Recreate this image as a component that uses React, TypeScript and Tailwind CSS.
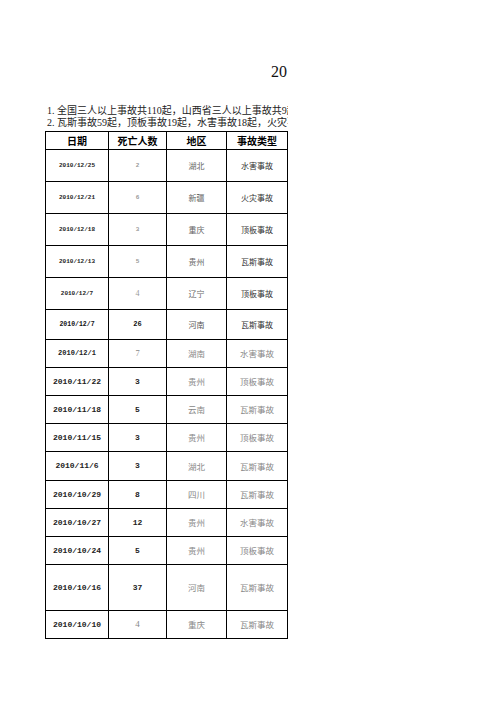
import React from "react";

type Row = {
  date: string;
  num: string;
  region: string;
  kind: string;
  h: string;
  dateCls: string;
  numCls: string;
  regionCls: string;
  kindCls: string;
};

// 字体
const mono = "font-['Liberation_Mono',monospace] font-bold";
const cjk = "font-['Noto_Sans_CJK_SC',sans-serif]";
const serif = "font-['Liberation_Serif','Noto_Sans_CJK_SC',serif]";

// 上半部分（小字）
const upper = {
  dateCls: `${mono} text-[6px] text-[#222]`,
  numCls: `${mono} text-[6px] text-[#999]`,
  regionCls: `${cjk} text-[8px] text-[#666]`,
  kindCls: `${cjk} text-[8px] text-[#333]`,
};

// 下半部分
const lower = {
  dateCls: `${mono} text-[8px] text-[#222]`,
  numCls: `${mono} text-[8px] text-[#222]`,
  regionCls: `${cjk} text-[8.5px] text-[#888]`,
  kindCls: `${cjk} text-[8.5px] text-[#888]`,
};

const rows: Row[] = [
  { date: "2010/12/25", num: "2", region: "湖北", kind: "水害事故", h: "h-[32px]", ...upper },
  { date: "2010/12/21", num: "6", region: "新疆", kind: "火灾事故", h: "h-[32px]", ...upper },
  { date: "2010/12/18", num: "3", region: "重庆", kind: "顶板事故", h: "h-[32px]", ...upper },
  { date: "2010/12/13", num: "5", region: "贵州", kind: "瓦斯事故", h: "h-[32px]", ...upper },
  {
    date: "2010/12/7", num: "4", region: "辽宁", kind: "顶板事故", h: "h-[32px]", ...upper,
    dateCls: `${mono} text-[6px] text-[#222]`,
    numCls: `${serif} text-[8px] text-[#999]`,
  },
  {
    date: "2010/12/7", num: "26", region: "河南", kind: "瓦斯事故", h: "h-[30px]", ...upper,
    dateCls: `${mono} text-[6.5px] text-[#111]`,
    numCls: `${mono} text-[7px] text-[#111]`,
    regionCls: `${cjk} text-[8px] text-[#555]`,
  },
  {
    date: "2010/12/1", num: "7", region: "湖南", kind: "水害事故", h: "h-[28px]", ...lower,
    dateCls: `${mono} text-[7px] text-[#222]`,
    numCls: `${serif} text-[8.5px] text-[#888]`,
  },
  { date: "2010/11/22", num: "3", region: "贵州", kind: "顶板事故", h: "h-[28px]", ...lower },
  { date: "2010/11/18", num: "5", region: "云南", kind: "瓦斯事故", h: "h-[28px]", ...lower },
  { date: "2010/11/15", num: "3", region: "贵州", kind: "顶板事故", h: "h-[28px]", ...lower },
  { date: "2010/11/6", num: "3", region: "湖北", kind: "瓦斯事故", h: "h-[29px]", ...lower },
  { date: "2010/10/29", num: "8", region: "四川", kind: "瓦斯事故", h: "h-[28px]", ...lower },
  { date: "2010/10/27", num: "12", region: "贵州", kind: "水害事故", h: "h-[28px]", ...lower },
  { date: "2010/10/24", num: "5", region: "贵州", kind: "顶板事故", h: "h-[28px]", ...lower },
  { date: "2010/10/16", num: "37", region: "河南", kind: "瓦斯事故", h: "h-[46px]", ...lower },
  {
    date: "2010/10/10", num: "4", region: "重庆", kind: "瓦斯事故", h: "h-[28px]", ...lower,
    numCls: `${serif} text-[9px] text-[#888]`,
  },
];

const cell = "flex items-center justify-center border-r border-b border-black whitespace-nowrap";

export default function App() {
  return (
    <div className="w-[288px] overflow-hidden bg-white">
      {/* 标题（右侧被截断） */}
      <div className={`h-[82px] pt-[62px] pl-[271px] leading-[20px] text-[16px] text-[#111] whitespace-nowrap ${serif}`}>
        2010年全国煤矿事故统计
      </div>

      {/* 说明文字 */}
      <div className={`mt-[23px] pl-[47px] text-[10px] leading-[12px] text-[#222] whitespace-nowrap ${serif}`}>
        <div>1. 全国三人以上事故共110起，山西省三人以上事故共9起，</div>
        <div>2. 瓦斯事故59起，顶板事故19起，水害事故18起，火灾事故</div>
      </div>

      {/* 表格 */}
      <div className="mt-[2px] ml-[45px] w-[243px] border-l border-t border-black">
        <div className={`flex h-[18px] ${cjk} text-[10px] font-bold text-black`}>
          <div className={`${cell} w-[63px]`}>日期</div>
          <div className={`${cell} w-[58px]`}>死亡人数</div>
          <div className={`${cell} w-[60px]`}>地区</div>
          <div className={`${cell} w-[61px]`}>事故类型</div>
        </div>
        {rows.map((r, i) => (
          <div key={i} className={`flex ${r.h}`}>
            <div className={`${cell} w-[63px] ${r.dateCls}`}>{r.date}</div>
            <div className={`${cell} w-[58px] ${r.numCls}`}>{r.num}</div>
            <div className={`${cell} w-[60px] ${r.regionCls}`}>{r.region}</div>
            <div className={`${cell} w-[61px] ${r.kindCls}`}>{r.kind}</div>
          </div>
        ))}
      </div>
    </div>
  );
}
